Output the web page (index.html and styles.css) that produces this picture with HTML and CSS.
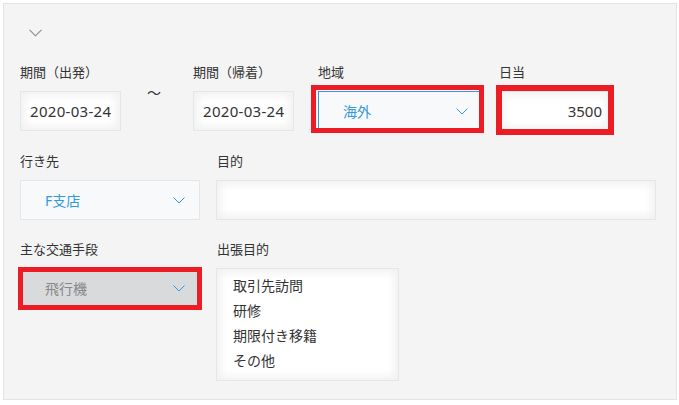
FILE: index.html
```html
<!DOCTYPE html>
<html lang="ja">
<head>
<meta charset="utf-8">
<title>出張申請</title>
<link rel="stylesheet" href="styles.css">
</head>
<body>
<div class="panel">
  <div class="toggle">
    <svg width="13" height="8" viewBox="0 0 13 8"><polyline points="0.5,0.8 6.5,6.8 12.5,0.8" fill="none" stroke="#8a8a8a" stroke-width="1.1"/></svg>
  </div>

  <div class="row row1">
    <div class="field w-date">
      <div class="label">期間（出発）</div>
      <div class="input date">2020-03-24</div>
    </div>
    <div class="tilde">〜</div>
    <div class="field w-date">
      <div class="label">期間（帰着）</div>
      <div class="input date">2020-03-24</div>
    </div>
    <div class="field w-region">
      <div class="label">地域</div>
      <div class="select focus">
        <span>海外</span>
        <svg width="12" height="7" viewBox="0 0 12 7"><polyline points="0.5,0.5 6,6 11.5,0.5" fill="none" stroke="#3498db" stroke-width="1"/></svg>
      </div>
      <div class="mark mark-region"></div>
    </div>
    <div class="field w-daily">
      <div class="label">日当</div>
      <div class="input num">3500</div>
      <div class="mark mark-daily"></div>
    </div>
  </div>

  <div class="row row2">
    <div class="field w-select">
      <div class="label">行き先</div>
      <div class="select">
        <span>F支店</span>
        <svg width="12" height="7" viewBox="0 0 12 7"><polyline points="0.5,0.5 6,6 11.5,0.5" fill="none" stroke="#3498db" stroke-width="1"/></svg>
      </div>
    </div>
    <div class="field w-purpose">
      <div class="label">目的</div>
      <div class="input"></div>
    </div>
  </div>

  <div class="row row3">
    <div class="field w-select">
      <div class="label">主な交通手段</div>
      <div class="select disabled">
        <span>飛行機</span>
        <svg width="12" height="7" viewBox="0 0 12 7"><polyline points="0.5,0.5 6,6 11.5,0.5" fill="none" stroke="#3498db" stroke-width="1"/></svg>
      </div>
      <div class="mark mark-transport"></div>
    </div>
    <div class="field w-list">
      <div class="label">出張目的</div>
      <ul class="list">
        <li>取引先訪問</li>
        <li>研修</li>
        <li>期限付き移籍</li>
        <li>その他</li>
      </ul>
    </div>
  </div>
</div>
</body>
</html>
```

FILE: styles.css
```css
html, body {
  margin: 0;
  padding: 0;
  background: #ffffff;
}

body {
  font-family: "Noto Sans", "Noto Sans CJK JP", sans-serif;
  color: #333333;
}

.panel {
  position: relative;
  box-sizing: border-box;
  margin: 3px 0 0 3px;
  width: 674px;
  height: 397px;
  border: 1px solid #e3e3e3;
  background: #f4f4f4;
  padding: 25px 0 0 16px;
}

.toggle {
  height: 7px;
  padding-left: 9px;
  line-height: 0;
}

.toggle svg {
  display: block;
}

.row {
  display: flex;
  align-items: flex-start;
}

.row1 {
  margin-top: 26px;
}

.row2 {
  margin-top: 20px;
}

.row3 {
  margin-top: 19px;
}

.field {
  position: relative;
}

.label {
  font-size: 13px;
  line-height: 20px;
  height: 20px;
  margin-bottom: 9px;
  white-space: nowrap;
}

.input {
  box-sizing: border-box;
  height: 40px;
  border: 1px solid #e3e7e8;
  background: #ffffff;
  box-shadow: 1px 1px 12px #f0f0f0 inset, -1px -1px 12px #f0f0f0 inset;
  font-size: 15px;
  line-height: 38px;
  padding: 0 9px;
  color: #333333;
  white-space: nowrap;
  overflow: hidden;
}

.input.date {
  letter-spacing: 0.3px;
}

.input.num {
  text-align: right;
  padding-right: 7px;
}

.select {
  box-sizing: border-box;
  height: 40px;
  border: 1px solid #e3e7e8;
  background: #f7f9fa;
  display: flex;
  align-items: center;
  justify-content: space-between;
  padding: 0 14px 0 24px;
  font-size: 14px;
  color: #3498db;
}

.select svg {
  display: block;
}

.select.focus {
  border-color: #3498db;
}

.select.disabled {
  background: #d9dadb;
  color: #888888;
}

.w-date {
  width: 101px;
}

.tilde {
  width: 72px;
  padding-left: 26px;
  box-sizing: border-box;
  margin-top: 21px;
  font-size: 14px;
  line-height: 20px;
  color: #333333;
}

.w-region {
  width: 165px;
  margin-left: 24px;
}

.w-daily {
  width: 111px;
  margin-left: 16px;
}

.w-select {
  width: 180px;
}

.w-purpose {
  width: 440px;
  margin-left: 16px;
}

.w-list {
  width: 183px;
  margin-left: 16px;
}

.w-list .label,
.w-purpose .label {
  padding-left: 1px;
}

.list {
  box-sizing: border-box;
  list-style: none;
  margin: 1px 0 0 0;
  padding: 4px 16px;
  height: 113px;
  border: 1px solid #e3e7e8;
  background: #ffffff;
  box-shadow: 1px 1px 12px #f0f0f0 inset, -1px -1px 12px #f0f0f0 inset;
  font-size: 14px;
  line-height: 25px;
  color: #333333;
}

.mark {
  position: absolute;
  box-sizing: border-box;
  border: 5px solid #ec1c24;
  pointer-events: none;
}

.mark-region {
  left: -7px;
  top: 23px;
  width: 173px;
  height: 48px;
}

.mark-daily {
  left: -3px;
  top: 23px;
  width: 118px;
  height: 50px;
  border-width: 6px;
}

.mark-transport {
  left: -2px;
  top: 28px;
  width: 184px;
  height: 43px;
}
```
